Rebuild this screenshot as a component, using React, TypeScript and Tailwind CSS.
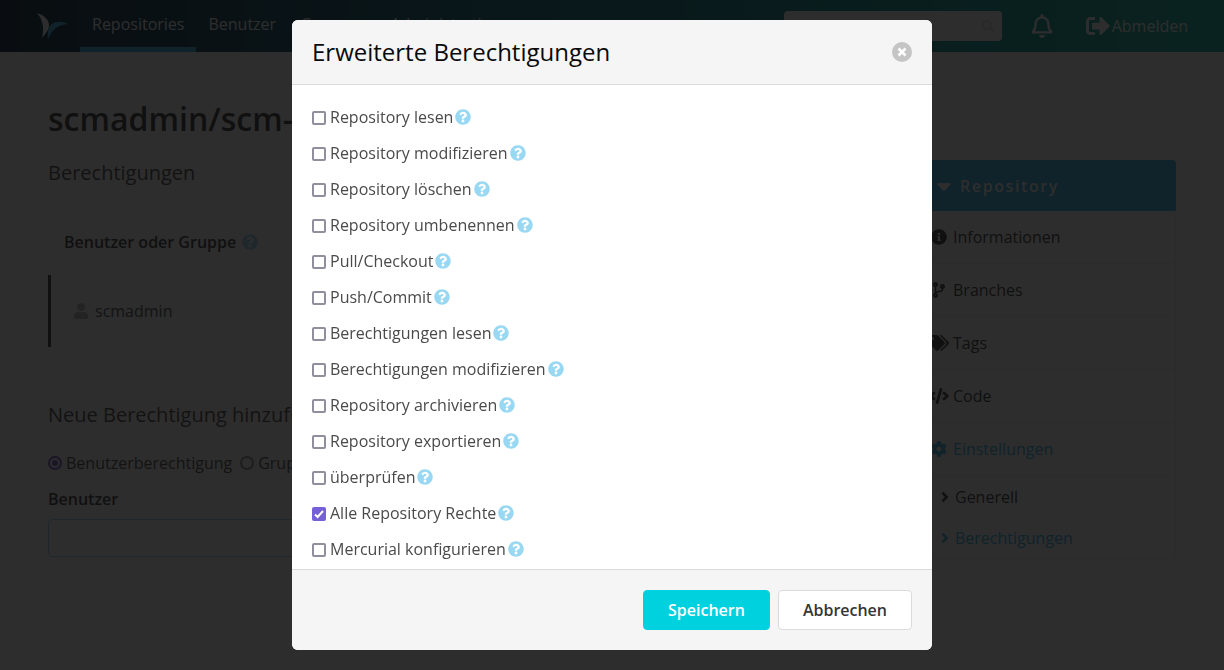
import { useState, type ReactNode } from "react";
import {
  FaAngleRight,
  FaCaretDown,
  FaCode,
  FaCodeBranch,
  FaCog,
  FaInfoCircle,
  FaQuestionCircle,
  FaRegBell,
  FaSearch,
  FaSignOutAlt,
  FaTags,
  FaUser,
} from "react-icons/fa";

const permissions = [
  "Repository lesen",
  "Repository modifizieren",
  "Repository löschen",
  "Repository umbenennen",
  "Pull/Checkout",
  "Push/Commit",
  "Berechtigungen lesen",
  "Berechtigungen modifizieren",
  "Repository archivieren",
  "Repository exportieren",
  "überprüfen",
  "Alle Repository Rechte",
  "Mercurial konfigurieren",
];

function Help() {
  return <FaQuestionCircle className="size-4 shrink-0 text-[#98d8f3]" aria-hidden="true" />;
}

function Logo() {
  return (
    <svg viewBox="0 0 32 28" className="h-7 w-8" aria-hidden="true">
      <path d="M1 1C8 3 13 8 13 13C13 18 10 21 6 26C8 18 8 9 1 1Z" fill="#ffffff" />
      <path d="M12 27C11 18 13 12 19 10.5C23 9.500 28 10 32 12C22 13 17 16 12 27Z" fill="#33b2e8" />
    </svg>
  );
}

function NavLink({ active, children }: { active?: boolean; children: ReactNode }) {
  return (
    <a
      href="#"
      className={
        active
          ? "flex items-center border-b-5 border-[#33b2e8] px-3 text-white"
          : "flex items-center border-b-5 border-transparent px-3 text-white"
      }
    >
      {children}
    </a>
  );
}

function Navbar() {
  return (
    <header className="flex h-13 justify-between bg-linear-to-r from-[#002038] via-[#006078] via-40% to-[#0bb39f] px-9">
      <nav className="flex">
        <a href="#" aria-label="SCM-Manager" className="flex w-11 items-center">
          <Logo />
        </a>
        <NavLink active>Repositories</NavLink>
        <NavLink>Benutzer</NavLink>
        <NavLink>Gruppen</NavLink>
        <NavLink>Administration</NavLink>
      </nav>
      <div className="flex items-center text-white">
        <div className="flex h-[30px] w-[218px] items-center rounded bg-white pr-2">
          <input type="search" aria-label="Suche" className="min-w-0 flex-1 px-2 outline-none" />
          <FaSearch className="size-3 text-[#dbdbdb]" />
        </div>
        <button type="button" aria-label="Benachrichtigungen" className="ml-7">
          <FaRegBell className="size-6" />
        </button>
        <a href="#" className="ml-8 flex items-center gap-0.5">
          <FaSignOutAlt className="size-6" />
          Abmelden
        </a>
      </div>
    </header>
  );
}

function SideItem({ icon, active, children }: { icon: ReactNode; active?: boolean; children: ReactNode }) {
  return (
    <li className="border-b border-[#ededed]">
      <a
        href="#"
        className={
          active
            ? "flex h-13 items-center gap-1 px-4 text-[#33b2e8]"
            : "flex h-13 items-center gap-1 px-4 text-[#363636]"
        }
      >
        <span className="flex w-5 justify-center">{icon}</span>
        {children}
      </a>
    </li>
  );
}

function SubItem({ active, children }: { active?: boolean; children: ReactNode }) {
  return (
    <li>
      <a
        href="#"
        className={
          active
            ? "flex h-[41px] items-center gap-0.5 pl-6 text-[#33b2e8]"
            : "flex h-[41px] items-center gap-0.5 pl-6 text-[#363636]"
        }
      >
        <FaAngleRight className="size-4" />
        {children}
      </a>
    </li>
  );
}

function Sidebar() {
  return (
    <aside className="mt-[59px] w-[264px] shrink-0">
      <button
        type="button"
        className="flex h-[51px] w-full items-center gap-1 rounded-t bg-[#33b2e8] pl-5 font-semibold tracking-widest text-white"
      >
        <FaCaretDown className="size-6" />
        Repository
      </button>
      <ul className="border-x border-b border-[#ededed]">
        <SideItem icon={<FaInfoCircle className="size-4" />}>Informationen</SideItem>
        <SideItem icon={<FaCodeBranch className="size-4" />}>Branches</SideItem>
        <SideItem icon={<FaTags className="size-5" />}>Tags</SideItem>
        <SideItem icon={<FaCode className="size-5" />}>Code</SideItem>
        <SideItem active icon={<FaCog className="size-4" />}>
          Einstellungen
        </SideItem>
        <SubItem>Generell</SubItem>
        <SubItem active>Berechtigungen</SubItem>
      </ul>
    </aside>
  );
}

function Radio({ label, checked }: { label: string; checked?: boolean }) {
  return (
    <label className="flex items-center gap-1">
      <input
        type="radio"
        name="kind"
        defaultChecked={checked}
        className="size-3.5 appearance-none rounded-full border-2 border-[#8f8f9d] checked:border-[#7957d5] checked:bg-[#7957d5] checked:bg-clip-content checked:p-0.5"
      />
      {label}
    </label>
  );
}

function PermissionsPage() {
  return (
    <main className="min-w-0 flex-1">
      <h1 className="text-[32px] leading-9 font-semibold whitespace-nowrap text-[#363636]">scmadmin/scm-manager</h1>
      <h2 className="mt-6 text-xl leading-6">Berechtigungen</h2>
      <table className="mt-6 w-full border-separate border-spacing-0 text-left">
        <thead>
          <tr>
            <th className="h-[66px] px-4 font-semibold text-[#363636]">
              <span className="flex items-center gap-1.5">
                Benutzer oder Gruppe
                <Help />
              </span>
            </th>
          </tr>
        </thead>
        <tbody>
          <tr>
            <td className="h-18 border-l-3 border-[#363636] bg-[#fafafa] pl-5.5">
              <span className="flex items-center gap-1.5">
                <FaUser className="size-4 text-[#b5b5b5]" />
                scmadmin
              </span>
            </td>
          </tr>
        </tbody>
      </table>
      <hr className="mt-7 border-t-2 border-[#f5f5f5]" />
      <h2 className="mt-[26px] text-xl leading-6 whitespace-nowrap">Neue Berechtigung hinzufügen</h2>
      <div className="mt-6 flex gap-2">
        <Radio label="Benutzerberechtigung" checked />
        <Radio label="Gruppenberechtigung" />
      </div>
      <label htmlFor="user" className="mt-3 block font-semibold text-[#363636]">
        Benutzer
      </label>
      <input id="user" className="mt-2 h-[38px] w-3/4 rounded border border-[#98d8f3] px-3" />
    </main>
  );
}

function PermissionRow({ label }: { label: string }) {
  const [checked, setChecked] = useState(label === "Alle Repository Rechte");
  return (
    <label className="flex items-center gap-1">
      <span className="grid size-3.5 translate-y-px">
        <input
          type="checkbox"
          checked={checked}
          onChange={(e) => setChecked(e.target.checked)}
          className="peer col-start-1 row-start-1 size-3.5 appearance-none rounded-xs border-2 border-[#8f8f9d] bg-white checked:border-[#7560d8] checked:bg-[#7560d8]"
        />
        <svg
          viewBox="0 0 14 14"
          className="pointer-events-none invisible col-start-1 row-start-1 size-3.5 peer-checked:visible"
          aria-hidden="true"
        >
          <path d="M3 7.5L5.6 10L11 4" fill="none" stroke="#ffffff" strokeWidth="2" />
        </svg>
      </span>
      <span className="flex items-center gap-0.5">
        {label}
        <Help />
      </span>
    </label>
  );
}

function PermissionsDialog() {
  return (
    <section
      role="dialog"
      aria-labelledby="dialog-title"
      className="flex max-h-[calc(100vh-40px)] w-full max-w-[640px] flex-col overflow-hidden rounded-md bg-white"
    >
      <header className="flex shrink-0 items-center justify-between border-b border-[#dbdbdb] bg-[#f5f5f5] p-5">
        <h2 id="dialog-title" className="text-2xl leading-6 text-[#0a0a0a]">
          Erweiterte Berechtigungen
        </h2>
        <button
          type="button"
          aria-label="Schließen"
          className="grid size-5 place-items-center rounded-full bg-[#c5c5c5] text-white"
        >
          <svg viewBox="0 0 20 20" className="size-5" aria-hidden="true">
            <path d="M6.500 6.500L13.500 13.500M13.500 6.500L6.500 13.500" stroke="currentColor" strokeWidth="2.600" />
          </svg>
        </button>
      </header>
      <div className="flex flex-1 flex-col items-start gap-3 overflow-y-auto p-5 [scrollbar-width:none]">
        {permissions.map((label) => (
          <PermissionRow key={label} label={label} />
        ))}
      </div>
      <footer className="flex shrink-0 justify-end gap-2 border-t border-[#dbdbdb] bg-[#f5f5f5] p-5">
        <button type="button" className="h-10 rounded border border-[#00d1df] bg-[#00d1df] px-6 font-semibold text-white">
          Speichern
        </button>
        <button type="button" className="h-10 rounded border border-[#dbdbdb] bg-white px-6 font-semibold text-[#363636]">
          Abbrechen
        </button>
      </footer>
    </section>
  );
}

export default function App() {
  return (
    <div className="h-screen overflow-hidden bg-white font-['Open_Sans','Noto_Sans',sans-serif] text-base text-[#4a4a4a]">
      <Navbar />
      <div className="flex gap-6 px-12 pt-[49px]">
        <PermissionsPage />
        <Sidebar />
      </div>
      <div className="fixed inset-0 flex items-center justify-center bg-[#0a0a0a]/86">
        <PermissionsDialog />
      </div>
    </div>
  );
}
